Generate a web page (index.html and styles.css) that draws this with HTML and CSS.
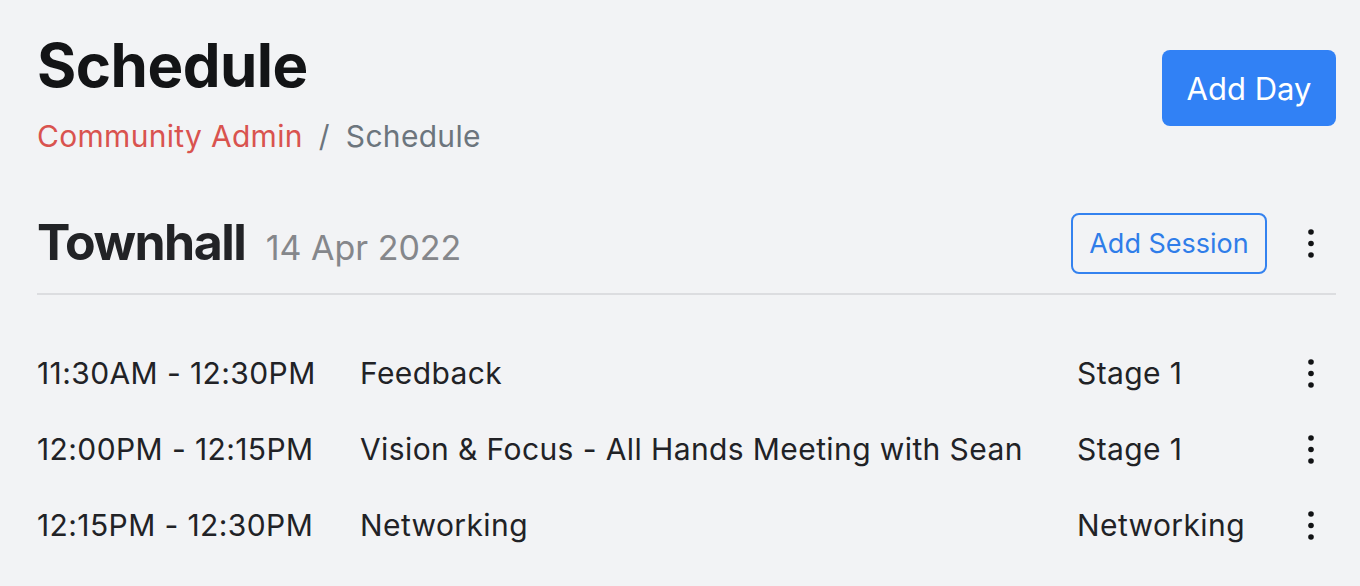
FILE: index.html
```html
<!DOCTYPE html>
<html lang="en">
<head>
<meta charset="utf-8">
<title>Schedule</title>
<link rel="stylesheet" href="styles.css">
</head>
<body>
<div class="page">
  <header class="page-header">
    <div class="titles">
      <h1 class="page-title">Schedule</h1>
      <nav class="breadcrumb">
        <a class="crumb-link" href="#">Community Admin</a>
        <span class="crumb-sep">/</span>
        <span class="crumb-current">Schedule</span>
      </nav>
    </div>
    <button class="btn-primary">Add Day</button>
  </header>

  <section class="day">
    <div class="day-header">
      <h2 class="day-title">Townhall <span class="day-date">14 Apr 2022</span></h2>
      <div class="day-actions">
        <button class="btn-outline">Add Session</button>
        <span class="kebab"><svg width="6" height="29" viewBox="0 0 6 29"><circle cx="3" cy="3" r="2.8"/><circle cx="3" cy="14.5" r="2.8"/><circle cx="3" cy="26" r="2.8"/></svg></span>
      </div>
    </div>
    <ul class="sessions">
      <li class="session">
        <span class="s-time">11:30AM - 12:30PM</span>
        <span class="s-title">Feedback</span>
        <span class="s-loc">Stage 1</span>
        <span class="kebab"><svg width="6" height="29" viewBox="0 0 6 29"><circle cx="3" cy="3" r="2.8"/><circle cx="3" cy="14.5" r="2.8"/><circle cx="3" cy="26" r="2.8"/></svg></span>
      </li>
      <li class="session">
        <span class="s-time">12:00PM - 12:15PM</span>
        <span class="s-title">Vision &amp; Focus - All Hands Meeting with Sean</span>
        <span class="s-loc">Stage 1</span>
        <span class="kebab"><svg width="6" height="29" viewBox="0 0 6 29"><circle cx="3" cy="3" r="2.8"/><circle cx="3" cy="14.5" r="2.8"/><circle cx="3" cy="26" r="2.8"/></svg></span>
      </li>
      <li class="session">
        <span class="s-time">12:15PM - 12:30PM</span>
        <span class="s-title">Networking</span>
        <span class="s-loc">Networking</span>
        <span class="kebab"><svg width="6" height="29" viewBox="0 0 6 29"><circle cx="3" cy="3" r="2.8"/><circle cx="3" cy="14.5" r="2.8"/><circle cx="3" cy="26" r="2.8"/></svg></span>
      </li>
    </ul>
  </section>
</div>
</body>
</html>
```
FILE: styles.css
```css
* { box-sizing: border-box; }
html, body { margin: 0; padding: 0; }
body {
  background: #f2f3f5;
  font-family: Inter, "Noto Sans", "Liberation Sans", sans-serif;
  color: #212226;
}
.page {
  padding: 29px 24px 0 37px;
}
.page-header {
  display: flex;
  justify-content: space-between;
  align-items: flex-start;
}
.page-title {
  margin: 0;
  font-size: 60px;
  font-weight: 700;
  line-height: 72px;
  color: #131416;
  letter-spacing: -0.5px;
}
.breadcrumb {
  display: flex;
  align-items: baseline;
  font-size: 30px;
  line-height: 40px;
  letter-spacing: 0.3px;
  margin-top: 15px;
}
.crumb-link { color: #d9534f; text-decoration: none; }
.crumb-sep { color: #6c757d; margin: 0 16px; }
.crumb-current { color: #6c757d; }
.btn-primary {
  margin-top: 21px;
  width: 174px;
  height: 76px;
  background: #3181f5;
  color: #fff;
  border: none;
  border-radius: 8px;
  font-family: inherit;
  font-size: 31px;
  padding: 0;
}
.day { margin-top: 55px; }
.day-header {
  display: flex;
  justify-content: space-between;
  align-items: center;
  padding-bottom: 14px;
  border-bottom: 2px solid #dcdde0;
}
.day-title {
  margin: 0;
  font-size: 50px;
  font-weight: 700;
  line-height: 62px;
  color: #222326;
  letter-spacing: -1.5px;
}
.day-date {
  font-size: 34px;
  font-weight: 400;
  color: #85878b;
  margin-left: 10px;
  letter-spacing: 0;
}
.day-actions {
  display: flex;
  align-items: center;
  gap: 41px;
  margin-top: -4px;
}
.btn-outline {
  width: 196px;
  height: 61px;
  background: transparent;
  color: #2f7de9;
  border: 2px solid #3482ef;
  border-radius: 8px;
  font-family: inherit;
  font-size: 27px;
  padding: 0;
}
.kebab {
  display: inline-flex;
  width: 6px;
  fill: #111214;
  margin-right: 22px;
}
.sessions {
  list-style: none;
  margin: 0;
  padding: 40px 0 0;
}
.session {
  display: grid;
  grid-template-columns: 323px 1fr 231px 6px;
  align-items: center;
  height: 76px;
  padding-right: 22px;
  font-size: 30px;
  letter-spacing: 0.4px;
  color: #212226;
}
.session .kebab { margin-right: 0; }
```
